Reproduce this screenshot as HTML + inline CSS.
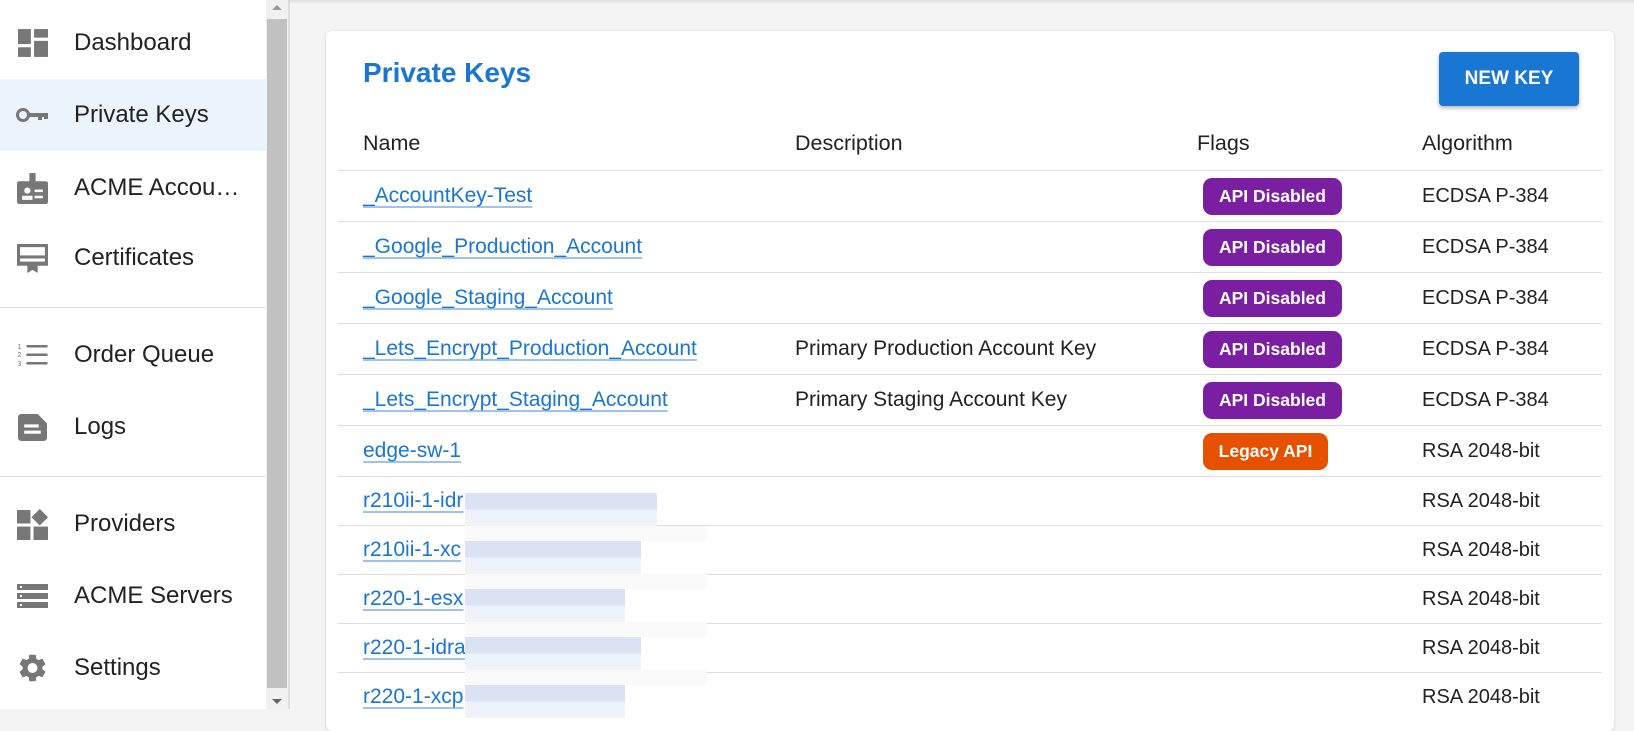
<!DOCTYPE html>
<html><head><style>
*{margin:0;padding:0;box-sizing:border-box}
body{width:1634px;height:709px;overflow:hidden;background:#f4f4f4;font-family:"Liberation Sans",sans-serif;position:relative;color:#222}
.side{position:absolute;left:0;top:0;width:266px;height:709px;background:#fff}
.item{position:absolute;left:0;width:266px;height:72px;display:flex;align-items:center}
.item .ic{position:absolute;left:16px;width:33px;height:36px;display:flex;align-items:center;justify-content:center}
.item span{position:absolute;left:74px;font-size:24px;color:#222}
.sel{background:#ebf3fc}
.div{position:absolute;left:0;width:266px;height:1px;background:#ddd}
.sb{position:absolute;left:266px;top:0;width:22px;height:709px;background:#f1f1f1}
.thumb{position:absolute;left:267px;top:19px;width:20px;height:669px;background:#c1c1c1}
.vline{position:absolute;left:288px;top:0;width:2px;height:709px;background:#ddd}
.topsh{position:absolute;left:290px;top:0;right:0;height:4px;background:linear-gradient(#ddd,#f4f4f4)}
.card{position:absolute;left:326px;top:31px;width:1288px;height:700px;background:#fff;border-radius:6px;box-shadow:0 1px 3px rgba(0,0,0,.15)}
h1{position:absolute;left:363px;top:57px;font-size:28px;font-weight:bold;color:#1976d2}
.btn{position:absolute;left:1439px;top:52px;width:140px;height:54px;background:#1976d2;color:#fff;border-radius:4px;font-size:19px;font-weight:bold;display:flex;align-items:center;justify-content:center;box-shadow:0 2px 4px rgba(0,0,0,.3)}
.t{position:absolute;font-size:21px;white-space:nowrap}
.al{font-size:20px;left:1422px}
.th{color:#222;font-size:21.5px}
.line{position:absolute;left:338px;width:1264px;height:1px;background:#ddd}
a{color:#1976d2;text-decoration:underline;text-decoration-color:#9cc4ee;text-underline-offset:4px}
.badge{position:absolute;height:37px;border-radius:9px;color:#fff;font-size:17.5px;font-weight:bold;display:flex;align-items:center;justify-content:center}
.p{background:#7b1fa2;left:1203px;width:139px}
.o{background:#e65100;left:1203px;width:125px}
.blur{position:absolute;left:465px;width:192px;height:33px;background:linear-gradient(#d9e3f4 50%,#eef3fb 50%)}
.blur2{position:absolute;left:465px;width:242px;height:16px;background:#fafafa}
</style></head><body>
<div class="side">
<div class="item" style="top:7px"><div class="ic"><svg width="30" height="28" viewBox="0 0 28 26" fill="#777"><rect x="0" y="0" width="12" height="14"/><rect x="15" y="0" width="13" height="8"/><rect x="0" y="17" width="12" height="9"/><rect x="15" y="11" width="13" height="15"/></svg></div><span>Dashboard</span></div>
<div class="item sel" style="top:79px"><div class="ic"><svg width="33" height="16" viewBox="0 0 33 14" fill="#777"><circle cx="7" cy="7" r="5.5" fill="none" stroke="#777" stroke-width="3"/><rect x="12" y="5" width="20" height="4"/><rect x="22" y="5" width="4" height="7"/><rect x="28" y="5" width="4" height="6"/></svg></div><span>Private Keys</span></div>
<div class="item" style="top:152px"><div class="ic"><svg width="31" height="31" viewBox="0 0 30 30" fill="#777"><rect x="0" y="8" width="30" height="22" rx="2"/><rect x="12" y="0" width="6" height="12"/><circle cx="10" cy="17" r="3" fill="#fff"/><rect x="5" y="22" width="10" height="4" fill="#fff"/><rect x="17" y="16" width="8" height="2.5" fill="#fff"/><rect x="17" y="22" width="8" height="2.5" fill="#fff"/></svg></div><span>ACME Accou…</span></div>
<div class="item" style="top:222px"><div class="ic"><svg width="31" height="29" viewBox="0 0 30 28" fill="#777"><path d="M0 0h30v21H20v7l-5-3-5 3v-7H0z"/><rect x="3" y="3" width="24" height="8" fill="#fff"/><rect x="3" y="14" width="24" height="3" fill="#fff"/></svg></div><span>Certificates</span></div>
<div class="div" style="top:307px"></div>
<div class="item" style="top:319px"><div class="ic"><svg width="31" height="24" viewBox="0 0 30 24" fill="#777"><rect x="9" y="2" width="21" height="2.5"/><rect x="9" y="10.5" width="21" height="2.5"/><rect x="9" y="19" width="21" height="2.5"/><text x="0" y="6" font-size="7">1</text><text x="0" y="14" font-size="7">2</text><text x="0" y="23" font-size="7">3</text></svg></div><span>Order Queue</span></div>
<div class="item" style="top:391px"><div class="ic"><svg width="29" height="27" viewBox="0 0 28 26" fill="#777"><path d="M3 0h16l9 9v14a3 3 0 0 1-3 3H3a3 3 0 0 1-3-3V3a3 3 0 0 1 3-3z"/><rect x="6" y="10" width="14" height="3" fill="#fff"/><rect x="6" y="16" width="16" height="3" fill="#fff"/></svg></div><span>Logs</span></div>
<div class="div" style="top:476px"></div>
<div class="item" style="top:488px"><div class="ic"><svg width="31" height="31" viewBox="0 0 30 30" fill="#777"><rect x="0" y="1" width="13" height="13"/><path d="M22 0l8 8-8 8-8-8z"/><rect x="0" y="17" width="13" height="13"/><rect x="16" y="17" width="14" height="13"/></svg></div><span>Providers</span></div>
<div class="item" style="top:560px"><div class="ic"><svg width="31" height="24" viewBox="0 0 31 24" fill="#777"><rect y="0" width="31" height="6"/><rect y="9" width="31" height="6"/><rect y="18" width="31" height="6"/><rect x="3" y="2" width="2" height="2" fill="#fff"/><rect x="3" y="11" width="2" height="2" fill="#fff"/><rect x="3" y="20" width="2" height="2" fill="#fff"/></svg></div><span>ACME Servers</span></div>
<div class="item" style="top:632px"><div class="ic"><svg width="34" height="34" viewBox="0 0 24 24" fill="#777"><path d="M19.14 12.94c.04-.3.06-.61.06-.94 0-.32-.02-.64-.07-.94l2.03-1.58a.49.49 0 0 0 .12-.61l-1.920-3.32a.49.49 0 0 0-.59-.22l-2.39.96c-.5-.38-1.03-.7-1.62-.94l-.36-2.54a.48.48 0 0 0-.48-.41h-3.84c-.24 0-.43.17-.47.41l-.36 2.54c-.59.24-1.13.57-1.62.94l-2.39-.96a.48.48 0 0 0-.59.22L2.74 8.87a.47.47 0 0 0 .12.61l2.03 1.58c-.05.3-.09.63-.09.94s.02.64.07.94l-2.03 1.58a.49.49 0 0 0-.12.61l1.92 3.32c.12.22.37.29.59.22l2.39-.96c.5.38 1.03.7 1.62.94l.36 2.54c.05.24.24.41.48.41h3.84c.24 0 .44-.17.47-.41l.36-2.54c.59-.24 1.13-.56 1.62-.94l2.39.96c.22.08.47 0 .59-.22l1.92-3.32a.47.47 0 0 0-.12-.61l-2.01-1.58zM12 15.6A3.6 3.6 0 1 1 12 8.4a3.6 3.6 0 0 1 0 7.2z"/></svg></div><span>Settings</span></div>
</div>
<div class="sb"></div><div class="thumb"></div><div class="vline"></div>
<div style="position:absolute;left:272px;top:5px;width:0;height:0;border:5px solid transparent;border-bottom-color:#999;border-top:0"></div>
<div style="position:absolute;left:272px;top:699px;width:0;height:0;border:5px solid transparent;border-top-color:#666;border-bottom:0"></div>
<div class="topsh"></div>
<div class="card"></div>
<h1>Private Keys</h1>
<div class="btn">NEW KEY</div>
<div class="t th" style="left:363px;top:131px">Name</div>
<div class="t th" style="left:795px;top:131px">Description</div>
<div class="t th" style="left:1197px;top:131px">Flags</div>
<div class="t th" style="left:1422px;top:131px">Algorithm</div>
<div class="line" style="top:170px"></div>
<div class="line" style="top:221px"></div>
<div class="line" style="top:272px"></div>
<div class="line" style="top:323px"></div>
<div class="line" style="top:374px"></div>
<div class="line" style="top:425px"></div>
<div class="line" style="top:476px"></div>
<div class="line" style="top:525px"></div>
<div class="line" style="top:574px"></div>
<div class="line" style="top:623px"></div>
<div class="line" style="top:672px"></div>

<div class="t" style="left:363px;top:184px"><a>_AccountKey-Test</a></div>
<div class="badge p" style="top:178px">API Disabled</div><div class="t al" style="top:185px">ECDSA P-384</div>
<div class="t" style="left:363px;top:235px"><a>_Google_Production_Account</a></div>
<div class="badge p" style="top:229px">API Disabled</div><div class="t al" style="top:236px">ECDSA P-384</div>
<div class="t" style="left:363px;top:286px"><a>_Google_Staging_Account</a></div>
<div class="badge p" style="top:280px">API Disabled</div><div class="t al" style="top:287px">ECDSA P-384</div>
<div class="t" style="left:363px;top:337px"><a>_Lets_Encrypt_Production_Account</a></div>
<div class="t" style="left:795px;top:337px">Primary Production Account Key</div>
<div class="badge p" style="top:331px">API Disabled</div><div class="t al" style="top:338px">ECDSA P-384</div>
<div class="t" style="left:363px;top:388px"><a>_Lets_Encrypt_Staging_Account</a></div>
<div class="t" style="left:795px;top:388px">Primary Staging Account Key</div>
<div class="badge p" style="top:382px">API Disabled</div><div class="t al" style="top:389px">ECDSA P-384</div>
<div class="t" style="left:363px;top:439px"><a>edge-sw-1</a></div>
<div class="badge o" style="top:433px">Legacy API</div><div class="t al" style="top:440px">RSA 2048-bit</div>

<div class="t" style="left:363px;top:489px"><a>r210ii-1-idr</a></div><div class="t al" style="top:490px">RSA 2048-bit</div>
<div class="t" style="left:363px;top:538px"><a>r210ii-1-xc</a></div><div class="t al" style="top:539px">RSA 2048-bit</div>
<div class="t" style="left:363px;top:587px"><a>r220-1-esx</a></div><div class="t al" style="top:588px">RSA 2048-bit</div>
<div class="t" style="left:363px;top:636px"><a>r220-1-idra</a></div><div class="t al" style="top:637px">RSA 2048-bit</div>
<div class="t" style="left:363px;top:685px"><a>r220-1-xcp</a></div><div class="t al" style="top:686px">RSA 2048-bit</div>

<div class="blur" style="top:493px"></div><div class="blur2" style="top:526px"></div>
<div class="blur" style="top:541px;width:176px"></div><div class="blur2" style="top:574px"></div>
<div class="blur" style="top:589px;width:160px"></div><div class="blur2" style="top:622px"></div>
<div class="blur" style="top:637px;width:176px"></div><div class="blur2" style="top:670px"></div>
<div class="blur" style="top:685px;width:160px"></div>
</body></html>
